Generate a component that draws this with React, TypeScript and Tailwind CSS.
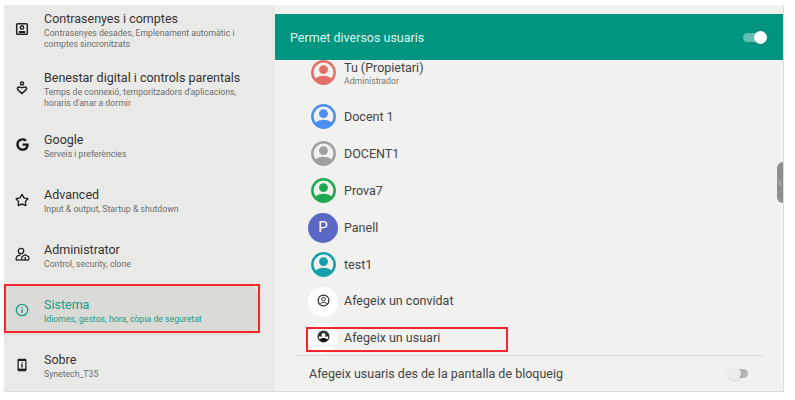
import { FaGoogle } from "react-icons/fa";

function Avatar({ color, id }: { color: string; id: string }) {
  return (
    <svg width="25" height="25" viewBox="0 0 26 26" className="shrink-0">
      <defs>
        <clipPath id={id}>
          <circle cx="13" cy="13" r="12" />
        </clipPath>
      </defs>
      <circle cx="13" cy="13" r="11.6" fill="#f1f1f0" stroke={color} strokeWidth="2.6" />
      <circle cx="13" cy="10" r="4.6" fill={color} />
      <ellipse cx="13" cy="23" rx="10.500" ry="6.500" fill={color} clipPath={`url(#${id})`} />
    </svg>
  );
}

function AddIcon({ filled }: { filled?: boolean }) {
  return (
    <svg width="13" height="13" viewBox="0 0 13 13" className="-mt-[2px]">
      <circle cx="6.500" cy="6.500" r="5.400" fill="#fff" stroke="#2a2a2a" strokeWidth="1.200" />
      {filled ? (
        <>
          <path d="M1.500 6.500a5 5 0 0 1 10 0z" fill="#2a2a2a" />
          <circle cx="6.500" cy="5" r="2" fill="#fff" />
          <path d="M2.500 9.800c1-1.200 2.500-1.800 4-1.800s3 .6 4 1.800a5 5 0 0 1-8 0z" fill="#111" />
        </>
      ) : (
        <>
          <circle cx="6.500" cy="5.200" r="1.800" fill="none" stroke="#2a2a2a" strokeWidth="1" />
          <path d="M3 9.800c1-1 2.200-1.400 3.500-1.400S9 8.800 10 9.800" fill="none" stroke="#2a2a2a" strokeWidth="1" />
        </>
      )}
    </svg>
  );
}

const menu = [
  {
    row: "h-[59px] pt-[6px]",
    title: "Contrasenyes i comptes",
    sub: "Contrasenyes desades, Emplenament automàtic i comptes sincronitzats",
    icon: (
      <svg width="14" height="14" viewBox="0 0 14 14" fill="none" stroke="#222" strokeWidth="1.500">
        <rect x="1.700" y="1.700" width="10.600" height="10.600" rx="0.800" />
        <circle cx="7" cy="5.500" r="1.700" />
        <path d="M3.800 10h6.400" strokeWidth="2" />
      </svg>
    ),
  },
  {
    row: "h-[59px] pt-[6px]",
    title: "Benestar digital i controls parentals",
    sub: "Temps de connexió, temporitzadors d'aplicacions, horaris d'anar a dormir",
    icon: (
      <svg width="14" height="14" viewBox="0 0 14 14" fill="none" stroke="#222" strokeWidth="1.500">
        <circle cx="7" cy="2.600" r="1.500" />
        <path d="M7 12.600 3 8.900C1.700 7.500 2.700 6 4.100 6c1.300 0 1.900.8 2.900.8S8.600 6 9.900 6c1.400 0 2.400 1.500 1.100 2.900z" />
      </svg>
    ),
  },
  {
    row: "h-[55px] pt-[9px]",
    title: "Google",
    sub: "Serveis i preferències",
    icon: <FaGoogle className="text-[13px] text-[#1c1c1c]" />,
  },
  {
    row: "h-[55px] pt-[9px]",
    title: "Advanced",
    sub: "Input & output, Startup & shutdown",
    icon: (
      <svg width="14" height="14" viewBox="0 0 14 14" fill="none" stroke="#222" strokeWidth="1.400" strokeLinejoin="round">
        <path d="M7 1.400 9 4.900 12.900 5.700 10.400 8.600 10.800 12.600 7 11 3.200 12.600 3.600 8.600 1.100 5.700 5 4.900z" />
      </svg>
    ),
  },
  {
    row: "h-[51px] pt-[9px]",
    title: "Administrator",
    sub: "Control, security, clone",
    icon: (
      <svg width="15" height="15" viewBox="0 0 15 15" fill="none" stroke="#222" strokeWidth="1.300">
        <circle cx="6" cy="4" r="2.700" />
        <path d="M1 13c0-3.200 2-4.800 4.600-4.800" />
        <path d="M1 13h13" />
        <path d="M6.800 12.800V9.800L10.200 7.800 13.800 9.800V12.800" />
        <path d="M10.200 10v3" />
      </svg>
    ),
  },
];

export default function App() {
  return (
    <div className="w-[795px] h-[400px] bg-white pl-1 pt-[5px] pb-2 pr-[11px] overflow-hidden font-['Roboto',sans-serif]">
      <div className="flex h-[387px] overflow-hidden border-r border-b border-[#dcdcda]">
        <div className="w-[271px] shrink-0 bg-[#e9e9e7] flex flex-col">
          {menu.map((m) => (
            <div key={m.title} className={m.row}>
              <div className="flex items-center">
                <div className="w-10 flex justify-center shrink-0 pr-1 -mt-[3px]">{m.icon}</div>
                <div className="w-[200px]">
                  <div className="text-[12.5px] leading-[16px] text-[#333] whitespace-nowrap">{m.title}</div>
                  <div className="text-[8.7px] leading-[11px] mt-[1px] text-[#6e6e6e]">{m.sub}</div>
                </div>
              </div>
            </div>
          ))}
          <div className="h-[49px] mr-4 pt-[13px] rounded-r-[14px] bg-[#dadad7] shadow-[0_3px_2px_rgba(0,0,0,0.05)] relative">
            <div className="flex items-center">
              <div className="w-10 flex justify-center shrink-0 pr-1 -mt-[2px]">
                <svg width="14" height="14" viewBox="0 0 14 14" fill="none" stroke="#1c9c88" strokeWidth="1.300">
                  <circle cx="7" cy="7" r="5.700" />
                  <path d="M7 6.300v3.600M7 4v1.300" />
                </svg>
              </div>
              <div>
                <div className="text-[12.5px] leading-[16px] text-[#1c9c88]">Sistema</div>
                <div className="text-[8.7px] leading-[11px] mt-[1px] text-[#1c9c88]">Idiomes, gestos, hora, còpia de seguretat</div>
              </div>
            </div>
            <div className="absolute left-0 top-0 w-[256px] h-[49px] border-2 border-[#f2262c]" />
          </div>
          <div className="pt-[19px]">
            <div className="flex items-center">
              <div className="w-10 flex justify-center shrink-0 pr-1 -mt-[2px]">
                <svg width="14" height="14" viewBox="0 0 14 14">
                  <rect x="2.500" y="0.800" width="9" height="12.400" rx="1.300" fill="#222" />
                  <rect x="3.800" y="3" width="6.400" height="7.600" fill="#e9e9e7" />
                  <path d="M6.300 4.200h1.400v1H6.300zM6.300 6h1.400v3.600H6.300z" fill="#222" />
                </svg>
              </div>
              <div>
                <div className="text-[12.5px] leading-[16px] text-[#333]">Sobre</div>
                <div className="text-[8.7px] leading-[11px] mt-[1px] text-[#6e6e6e]">Synetech_T35</div>
              </div>
            </div>
          </div>
        </div>

        <div className="flex-1 bg-[#f1f1f0] pt-[9px] relative flex flex-col">
          <div className="h-[46px] shrink-0 bg-[#009581] flex items-center justify-between pl-[15px] pr-[16px] text-[12.5px] text-[#dff3ef]">
            <span className="mt-[2px]">Permet diversos usuaris</span>
            <div className="relative w-[24px] h-[9px] rounded-full bg-[#66bfb3]">
              <div className="absolute right-0 -top-[2px] w-[13px] h-[13px] rounded-full bg-white shadow" />
            </div>
          </div>

          <div className="pl-[36px] pt-[1px] flex flex-col">
            <div className="h-[37px] flex items-start gap-[8px]">
              <div className="-mt-[1px]">
                <Avatar color="#e46f68" id="avatarOwner" />
              </div>
              <div className="-mt-[1px]">
                <div className="text-[12.5px] leading-[16px] text-[#444]">Tu (Propietari)</div>
                <div className="text-[8.7px] leading-[11px] text-[#777]">Administrador</div>
              </div>
            </div>
            {[
              ["Docent 1", "#4c8df0", "avatarDocent"],
              ["DOCENT1", "#a0a0a0", "avatarDocentGrey"],
              ["Prova7", "#1ea84f", "avatarProva"],
            ].map(([name, color, id]) => (
              <div key={name} className="h-[37px] flex items-center gap-[8px] text-[12.5px] text-[#444]">
                <Avatar color={color} id={id} />
                <span className="mt-[2px]">{name}</span>
              </div>
            ))}
            <div className="h-[37px] flex items-center gap-[6px] -ml-[3px] text-[12.5px] text-[#444]">
              <div className="w-[30px] h-[30px] rounded-full bg-[#5b67c4] text-white text-[15px] flex items-center justify-center">P</div>
              <span className="mt-[2px]">Panell</span>
            </div>
            <div className="h-[37px] flex items-center gap-[8px] text-[12.5px] text-[#444]">
              <Avatar color="#13a0ac" id="avatarTest" />
              <span className="mt-[2px]">test1</span>
            </div>
            <div className="h-[37px] flex items-center gap-[6px] -ml-[3px] text-[12.5px] text-[#444]">
              <div className="w-[30px] h-[30px] rounded-full bg-white flex items-center justify-center">
                <AddIcon />
              </div>
              <span>Afegeix un convidat</span>
            </div>
            <div className="h-[35px] flex items-center gap-[6px] -ml-[3px] text-[12.5px] text-[#444] relative">
              <div className="w-[30px] h-[30px] rounded-full bg-white flex items-center justify-center">
                <AddIcon filled />
              </div>
              <span className="mt-[2px]">Afegeix un usuari</span>
              <div className="absolute -left-[2px] top-[7px] w-[202px] h-[25px] border-2 border-[#f2262c]" />
            </div>
          </div>

          <div className="mx-[19px] border-t border-[#dcdcda]" />
          <div className="flex-1 flex items-center justify-between pl-[15px] pr-[17px] text-[12.5px] text-[#444]">
            <span className="ml-[19px] mt-[2px]">Afegeix usuaris des de la pantalla de bloqueig</span>
            <div className="relative w-[19px] h-[9px] mr-[18px] rounded-full bg-[#b5b5b3]">
              <div className="absolute -left-[1px] -top-[2px] w-[13px] h-[13px] rounded-full bg-[#ececea] shadow" />
            </div>
          </div>

          <div className="absolute right-0 top-[157px] w-[6px] h-[41px] rounded-l-[6px] bg-[#8f8f8f] flex items-center justify-center">
            <svg width="4" height="6" viewBox="0 0 4 6" fill="none" stroke="#c4c4c4" strokeWidth="1">
              <path d="M3 .8 1 3l2 2.200" />
            </svg>
          </div>
        </div>
      </div>
    </div>
  );
}
